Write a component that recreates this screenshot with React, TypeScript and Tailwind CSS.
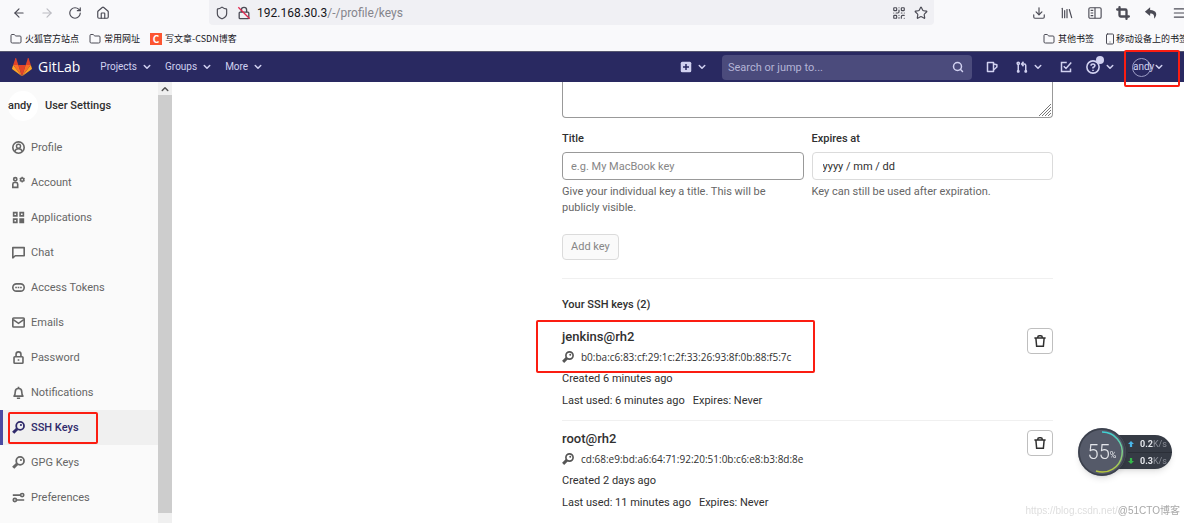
import { FC, ReactNode } from 'react'
import {
  ArrowLeft,
  ArrowRight,
  Crop,
  Download,
  Folder,
  House,
  Library,
  Menu,
  QrCode,
  RotateCw,
  Search,
  Shield,
  Smartphone,
  Star,
} from 'lucide-react'

interface IconProps {
  className?: string
}

interface SvgProps extends IconProps {
  children: ReactNode
}

// 16 unit grid shared by all the GitLab icons
const Svg: FC<SvgProps> = ({ className = 'size-3', children }) => (
  <svg
    viewBox="0 0 16 16"
    className={`shrink-0 ${className}`}
    fill="none"
    stroke="currentColor"
    strokeWidth="2"
    aria-hidden="true"
  >
    {children}
  </svg>
)

const IconChevronDown: FC<IconProps> = ({ className = 'size-2' }) => (
  <Svg className={className}>
    <path d="M2.5 5l5.500 5.500L13.500 5" strokeWidth="3" strokeLinecap="round" strokeLinejoin="round" />
  </Svg>
)

const IconKey: FC<IconProps> = ({ className = 'size-3' }) => (
  <Svg className={className}>
    <circle cx="10" cy="6" r="4.800" strokeWidth="2.200" />
    <path d="M6.500 9.500L1.500 14.500" strokeWidth="3.800" />
    <circle cx="11" cy="5" r="1.300" fill="currentColor" stroke="none" />
  </Svg>
)

const IconTrash: FC<IconProps> = ({ className = 'size-3' }) => (
  <Svg className={className}>
    <path d="M0.500 4h15M5 4V3q0-2 2-2h2q2 0 2 2v1M2.500 4l1 11h9l1-11" />
  </Svg>
)

const IconLogo: FC = () => (
  <svg viewBox="0 0 36 33" className="w-5 shrink-0" aria-hidden="true">
    <path d="M18 33l6.600-20.300H11.400z" fill="#e24329" />
    <path d="M18 33l-6.600-20.300H2.100z" fill="#fc6d26" />
    <path d="M2.100 12.700l-2 6.200c-.2.600 0 1.200.5 1.500L18 33z" fill="#fca326" />
    <path d="M2.100 12.700h9.300L7.400.500c-.2-.6-1.100-.6-1.300 0z" fill="#e24329" />
    <path d="M18 33l6.600-20.300h9.300z" fill="#fc6d26" />
    <path d="M33.900 12.700l2 6.200c.2.600 0 1.200-.5 1.500L18 33z" fill="#fca326" />
    <path d="M33.900 12.700h-9.300l4-12.200c.2-.6 1.100-.6 1.300 0z" fill="#e24329" />
  </svg>
)

const menuItems = [
  {
    name: 'Profile',
    icon: (
      <>
        <circle cx="8" cy="8" r="7" />
        <circle cx="8" cy="6.500" r="2.500" strokeWidth="1.800" />
        <path d="M3.500 13c.5-2.500 2-3.500 4.500-3.500s4 1 4.500 3.500" strokeWidth="1.800" />
      </>
    ),
  },
  {
    name: 'Account',
    icon: (
      <>
        <circle cx="4" cy="4" r="2" />
        <path d="M1 14v-4q0-2 2-2h2q2 0 2 2v4z" />
        <circle cx="12.500" cy="4.500" r="2" />
        <path d="M12.500 1v1.500M12.500 6.500V8M9.500 2.800l1.300.7M14.200 5.500l1.300.7M9.500 6.200l1.300-.7M14.200 3.500l1.300-.7" strokeWidth="1.500" />
      </>
    ),
  },
  {
    name: 'Applications',
    icon: (
      <>
        <path d="M2 2h4v4H2zM10 2h4v4h-4zM2 10h4v4H2z" />
        <path d="M10 10h4v4h-4z" fill="currentColor" />
      </>
    ),
  },
  { name: 'Chat', icon: <path d="M1 2h14v10H4l-3 2.500z" strokeLinejoin="round" /> },
  {
    name: 'Access Tokens',
    icon: (
      <>
        <rect x="1" y="3.500" width="14" height="9" rx="4.500" />
        <path d="M4 8h2M7 8h2M10 8h2" />
      </>
    ),
  },
  {
    name: 'Emails',
    icon: (
      <>
        <rect x="1" y="2.500" width="14" height="11" rx="1" />
        <path d="M1.500 4.500L8 9l6.500-4.500" />
      </>
    ),
  },
  {
    name: 'Password',
    icon: (
      <>
        <rect x="2.500" y="7" width="11" height="8" rx="1" />
        <path d="M5 7V4q0-3 3-3t3 3v3M8 10v2" />
      </>
    ),
  },
  {
    name: 'Notifications',
    icon: (
      <>
        <path d="M2.500 12.500q1.500-2 1.500-5.500 0-4 4-4t4 4q0 3.500 1.500 5.500z" strokeLinejoin="round" />
        <path d="M8 1v2M6 15h4" />
      </>
    ),
  },
  { name: 'SSH Keys', icon: <IconKey className="size-4" />, active: true },
  { name: 'GPG Keys', icon: <IconKey className="size-4" /> },
  {
    name: 'Preferences',
    icon: (
      <>
        <path d="M1 5h9M6 11h9" />
        <circle cx="12.500" cy="5" r="2" />
        <circle cx="3.500" cy="11" r="2" />
      </>
    ),
  },
]

const sshKeys = [
  {
    title: 'jenkins@rh2',
    fingerprint: 'b0:ba:c6:83:cf:29:1c:2f:33:26:93:8f:0b:88:f5:7c',
    created: 'Created 6 minutes ago',
    lastUsed: 'Last used: 6 minutes ago',
    marked: true,
  },
  {
    title: 'root@rh2',
    fingerprint: 'cd:68:e9:bd:a6:64:71:92:20:51:0b:c6:e8:b3:8d:8e',
    created: 'Created 2 days ago',
    lastUsed: 'Last used: 11 minutes ago',
    marked: false,
  },
]

const BrowserBar: FC = () => (
  <div className="bg-[#f9f9fb] text-[#4b4b55]">
    <div className="flex h-[26px] items-start overflow-hidden pl-3">
      <div className="flex h-[26px] items-center gap-3.5">
        <button aria-label="Back"><ArrowLeft className="size-3.5" strokeWidth={2} /></button>
        <button aria-label="Forward"><ArrowRight className="size-3.5 text-[#bcbcc2]" strokeWidth={2} /></button>
        <button aria-label="Reload"><RotateCw className="size-3.5" strokeWidth={2} /></button>
        <button aria-label="Home"><House className="size-3.5" strokeWidth={2} /></button>
      </div>
      <div className="ml-[99px] flex h-[25px] min-w-0 flex-1 items-center rounded-b bg-[#f0f0f4] px-1.5">
        <Shield className="size-3.5 shrink-0" strokeWidth={2} />
        <svg viewBox="0 0 16 16" className="ml-2 size-3.5 shrink-0" fill="none" stroke="currentColor" strokeWidth="1.500" aria-hidden="true">
          <rect x="2.500" y="7" width="11" height="7.500" rx="1" />
          <path d="M5 7V4.500q0-3 3-3t3 3V7" />
          <path d="M1.500 1.500l13 13" stroke="#e22850" />
        </svg>
        <span className="ml-1.5 flex-1 truncate text-xs text-[#85858c]">
          <span className="text-[#15141a]">192.168.30.3</span>/-/profile/keys
        </span>
        <QrCode className="mr-2 size-3.5 shrink-0" strokeWidth={2} />
        <Star className="size-3.5 shrink-0" strokeWidth={2} />
      </div>
      <div className="ml-[98px] -mr-0.5 flex h-[26px] shrink-0 items-center gap-3.5">
        <button aria-label="Downloads"><Download className="size-3.5" strokeWidth={2} /></button>
        <button aria-label="Library"><Library className="size-3.5" strokeWidth={2} /></button>
        <button aria-label="Sidebars">
          <svg viewBox="0 0 16 16" className="size-3.5" fill="none" stroke="currentColor" strokeWidth="1.300" aria-hidden="true">
            <rect x="1" y="2" width="14" height="12" rx="1.500" />
            <path d="M8 2v12M3 5h3M3 8h3M3 11h3" />
          </svg>
        </button>
        <button aria-label="Screenshot"><Crop className="size-3.5" strokeWidth={4} /></button>
        <button aria-label="Undo">
          <svg viewBox="0 0 16 16" className="size-3.5" fill="currentColor" aria-hidden="true">
            <path d="M7 1.500L1 6.500l6 5V8.500c4 0 5 2 4.500 6C16 10 14.500 4.800 7 4.500z" />
          </svg>
        </button>
        <button aria-label="Menu"><Menu className="size-3.5" strokeWidth={2} /></button>
      </div>
    </div>
    <div className="flex h-[25px] items-center gap-2.5 overflow-hidden pl-2.5 font-['Noto_Sans_CJK_SC',sans-serif] text-[9px] whitespace-nowrap text-[#15141a]">
      <a href="#" className="flex items-center gap-[3px]"><Folder className="size-3 text-[#4b4b55]" />火狐官方站点</a>
      <a href="#" className="flex items-center gap-[3px]"><Folder className="size-3 text-[#4b4b55]" />常用网址</a>
      <a href="#" className="flex items-center gap-[3px]">
        <span className="flex size-3 items-center justify-center bg-[#fc5531] text-[10px] font-bold text-white">C</span>
        写文章-CSDN博客
      </a>
      <a href="#" className="ml-auto flex items-center gap-[3px]"><Folder className="size-3 text-[#4b4b55]" />其他书签</a>
      <a href="#" className="-mr-1 flex items-center"><Smartphone className="size-3 text-[#4b4b55]" />移动设备上的书签</a>
    </div>
  </div>
)

const NavBar: FC = () => (
  <nav className="flex h-[31px] items-center border-t border-[#55566f] bg-[#292961] pl-3 text-[#d1d1f0]">
    <a href="#" className="flex items-center gap-1.5 font-['Open_Sans',sans-serif] text-sm text-white">
      <IconLogo />
      GitLab
    </a>
    <div className="ml-5 flex items-center gap-3.5 text-[10px]">
      <button className="flex items-center gap-1.5">Projects <IconChevronDown /></button>
      <button className="flex items-center gap-1.5">Groups <IconChevronDown /></button>
      <button className="flex items-center gap-1.5">More <IconChevronDown /></button>
    </div>
    <button aria-label="New" className="mr-4 ml-auto flex items-center gap-1.5">
      <Svg>
        <rect x="1" y="1" width="14" height="14" rx="2" fill="currentColor" stroke="none" />
        <path d="M8 4v8M4 8h8" stroke="#292961" />
      </Svg>
      <IconChevronDown />
    </button>
    <label className="flex h-[25px] w-[250px] items-center rounded bg-[#4b4b7c] px-1.5">
      <input
        aria-label="Search"
        placeholder="Search or jump to..."
        className="h-5 min-w-0 flex-1 text-[11px] outline-none placeholder:text-[#b4b4d6]"
      />
      <Search className="mr-0.5 size-3" strokeWidth={3} />
    </label>
    <div className="flex items-center">
      <button aria-label="Issues" className="ml-3.5">
        <Svg>
          <path d="M2 2h8v12H2z" strokeLinejoin="round" />
          <path d="M10 4l4.500 1v3L10 12" strokeLinejoin="round" />
        </Svg>
      </button>
      <button aria-label="Merge requests" className="ml-4.5 flex items-center gap-1.5">
        <Svg>
          <path d="M3 4v11M13 15V6q0-2-2-2H8M10 1L7.500 4 10 7" />
          <circle cx="3" cy="3" r="1.500" />
          <circle cx="3" cy="13.500" r="1" />
          <circle cx="13" cy="13.500" r="1" />
        </Svg>
        <IconChevronDown />
      </button>
      <button aria-label="To-Do List" className="ml-4.5">
        <Svg>
          <path d="M9 2H2v12h12v-4M5 7l3 3 7-8" />
        </Svg>
      </button>
      <button aria-label="Help" className="relative ml-3.5 flex items-center gap-1.5">
        <Svg className="size-3.5">
          <circle cx="8" cy="8" r="7" strokeWidth="1.800" />
          <path d="M5.800 6.500q0-2 2.200-2t2.200 2Q10 8 8 8.500v1.200M8 11v1.500" strokeWidth="1.800" />
        </Svg>
        <IconChevronDown />
        <span className="absolute -top-1 left-2.5 size-2 rounded-full bg-[#d1d1f0]" />
      </button>
      <div className="relative mr-[21px] ml-4.5">
        <button className="flex items-center text-[10px]">
          <span className="flex size-[19px] items-center rounded-full border border-[#9c9cc4] whitespace-nowrap">andy</span>
          <IconChevronDown className="ml-1 size-2" />
        </button>
        <div className="pointer-events-none absolute -top-2 -left-2 z-10 h-[37px] w-14 rounded-xs border-2 border-[#fb1d11]" />
      </div>
    </div>
  </nav>
)

const Sidebar: FC = () => (
  <aside className="flex w-[172px] shrink-0 bg-[#fafafa]">
    <div className="flex-1">
      <div className="flex h-12 items-center pl-2 text-[11px] font-medium text-[#303030]">
        <span className="flex size-[30px] items-center rounded-full bg-white">andy</span>
        <span className="ml-[7px]">User Settings</span>
      </div>
      <ul className="text-[11px]">
        {menuItems.map(({ name, icon, active }) => (
          <li key={name} className="relative">
            <a
              href="#"
              className={`flex h-[35px] items-center gap-1.5 border-l-[3px] pl-[9px] ${
                active
                  ? 'border-[#4b4ba3] bg-[#f0f0f0] font-medium text-[#2f2a6b]'
                  : 'border-transparent text-[#666]'
              }`}
            >
              <Svg className="size-[13px]">{icon}</Svg>
              {name}
            </a>
            {active && (
              <div className="pointer-events-none absolute top-0.5 left-2 h-8 w-[90px] rounded-xs border-2 border-[#fb1d11]" />
            )}
          </li>
        ))}
      </ul>
    </div>
    <div className="flex w-3.5 flex-col bg-[#f0f0f0] pb-2.5">
      <div className="flex h-[13px] items-center justify-center text-[#505050]">
        <IconChevronDown className="size-2 rotate-180" />
      </div>
      <div className="flex-1 bg-[#cdcdcd]" />
    </div>
  </aside>
)

const KeyForm: FC = () => (
  <form className="border-b border-[#f0f0f0] pb-[18px]">
    <div className="relative">
      <textarea
        aria-label="Key"
        className="block h-9 w-full resize-none rounded-b border border-t-0 border-[#999] outline-none"
      />
      <svg viewBox="0 0 12 12" className="absolute right-0.5 bottom-0.5 size-3 stroke-[#777]" aria-hidden="true">
        <path d="M0 12L12 0M3 12l9-9M6 12l6-6M9 12l3-3" />
      </svg>
    </div>
    <div className="mt-[13px] grid grid-cols-2 gap-2">
      <div>
        <label htmlFor="title" className="block font-medium text-[#303030]">Title</label>
        <input
          id="title"
          placeholder="e.g. My MacBook key"
          className="mt-[5px] h-7 w-full rounded-sm border border-[#999] px-2 placeholder:text-[#868686]"
        />
        <p className="mt-1 text-[#666]">Give your individual key a title. This will be publicly visible.</p>
      </div>
      <div>
        <label htmlFor="expires" className="block font-medium text-[#303030]">Expires at</label>
        <input
          id="expires"
          defaultValue="yyyy / mm / dd"
          className="mt-[5px] h-7 w-full rounded-sm border border-[#dbdbdb] px-2.5 text-[#303030]"
        />
        <p className="mt-1 text-[#666]">Key can still be used after expiration.</p>
      </div>
    </div>
    <button type="button" className="mt-4.5 h-[26px] rounded-sm border border-[#dbdbdb] bg-[#fafafa] px-2 text-[#868686]">
      Add key
    </button>
  </form>
)

const KeyList: FC = () => (
  <section>
    <h5 className="mt-4.5 mb-1.5 font-medium">Your SSH keys (2)</h5>
    <ul className="divide-y divide-[#f0f0f0]">
      {sshKeys.map(({ title, fingerprint, created, lastUsed, marked }) => (
        <li key={title} className="relative flex items-start justify-between pt-[9px] pb-[11px]">
          <div className="pt-px">
            <h6 className="text-[13px] font-medium leading-4">{title}</h6>
            <p className="mt-1 flex items-center gap-[7px]">
              <IconKey className="size-3 text-[#555]" />
              <span className="font-['Open_Sans',sans-serif] text-[10px]">{fingerprint}</span>
            </p>
            <p className="mt-1.5">{created}</p>
            <p className="mt-1.5 flex gap-2"><span>{lastUsed}</span><span>Expires: Never</span></p>
          </div>
          <button aria-label="Delete" className="flex size-[26px] items-center justify-center rounded-sm border border-[#bfbfbf]">
            <IconTrash />
          </button>
          {marked && (
            <div className="pointer-events-none absolute top-px -left-[26px] h-[53px] w-[279px] rounded-xs border-2 border-[#fb1d11]" />
          )}
        </li>
      ))}
    </ul>
  </section>
)

const SpeedWidget: FC = () => (
  <div className="fixed right-3 bottom-[47px] flex items-center">
    <div className="z-10 -mr-3 flex size-12 items-center justify-center rounded-full bg-[#555a69] text-[#e3e5ea] shadow-md">
      <svg viewBox="0 0 48 48" className="absolute left-0 size-12" fill="none" strokeWidth="1.500" aria-hidden="true">
        <defs>
          <linearGradient id="ring" x1="0" y1="0" x2="0" y2="1">
            <stop offset="0" stopColor="#3fd0d4" />
            <stop offset="1" stopColor="#b8c83c" />
          </linearGradient>
        </defs>
        <circle cx="24" cy="24" r="23" stroke="#3b404c" />
        <path d="M24 4A20 20 0 1 1 18 43" stroke="url(#ring)" />
      </svg>
      <span className="text-xl font-light">55</span>
      <span className="mt-1.5 text-[9px]">%</span>
    </div>
    <div className="flex h-[34px] w-[58px] flex-col justify-center rounded-r-full bg-[#363b45] pl-3.5 text-[9px] leading-4 text-[#8b8f98] shadow-md">
      <div className="flex items-center border-b border-[#2b2f38]">
        <svg viewBox="0 0 8 8" className="mr-1.5 size-1.5 shrink-0" fill="#4ab5e8" aria-hidden="true"><path d="M4 0l4 4H5.500v4h-3V4H0z" /></svg>
        <b className="text-[#e3e5ea]">0.2</b>K/s
      </div>
      <div className="flex items-center">
        <svg viewBox="0 0 8 8" className="mr-1.5 size-1.5 shrink-0" fill="#35b84b" aria-hidden="true"><path d="M4 8L0 4h2.500V0h3v4H8z" /></svg>
        <b className="text-[#e3e5ea]">0.3</b>K/s
      </div>
    </div>
  </div>
)

const App: FC = () => (
  <div className="flex h-screen flex-col overflow-hidden bg-white font-['Roboto',sans-serif] text-[11px] leading-4 text-[#303030]">
    <BrowserBar />
    <NavBar />
    <div className="flex min-h-0 flex-1">
      <Sidebar />
      <main className="min-w-0 flex-1 pr-[131px] pl-[390px]">
        <KeyForm />
        <KeyList />
      </main>
    </div>
    <SpeedWidget />
    <div className="fixed right-1 bottom-1 flex font-['Liberation_Sans','Noto_Sans_CJK_SC',sans-serif] text-[10px] leading-4">
      <span className="text-[#dedede]">https://blog.csdn.net/</span>
      <span className="text-[#a8a8a8]">@51CTO博客</span>
    </div>
  </div>
)

export default App
